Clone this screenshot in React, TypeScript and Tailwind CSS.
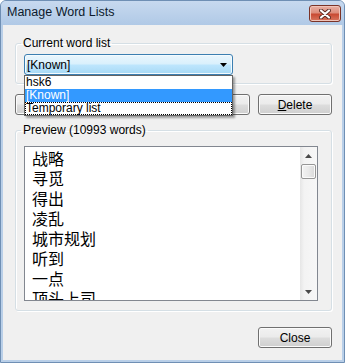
import React from "react";

const words = ["战略", "寻觅", "得出", "凌乱", "城市规划", "听到", "一点", "顶头上司"];

const WinButton: React.FC<{ children?: React.ReactNode; className?: string }> = ({ children, className = "" }) => {
  return (
    <button
      className={`h-[21px] w-[74px] shrink-0 rounded-[3px] border border-[#707070] bg-[linear-gradient(#f2f2f2_0%,#ebebeb_48%,#dddddd_52%,#cfcfcf_100%)] shadow-[inset_0_0_0_1px_#fbfbfb] text-[12px] leading-none text-black ${className}`}
    >
      {children}
    </button>
  );
};

const Arrow: React.FC<{ up?: boolean }> = ({ up }) => (
  <svg width="7" height="4" viewBox="0 0 7 4">
    {up ? <path d="M3.5 0 L7 4 L0 4 Z" fill="#4a4a4a" /> : <path d="M0 0 L7 0 L3.5 4 Z" fill="#4a4a4a" />}
  </svg>
);

export default function App() {
  return (
    <div className="flex h-[363px] w-[345px] flex-col overflow-hidden rounded-t-[6px] border border-[#6f8fb4] bg-[#b9cfe8] font-['Liberation_Sans',Arial,sans-serif] text-[12px] text-black">
      {/* title bar */}
      <div className="flex h-[24px] shrink-0 justify-between bg-[linear-gradient(#c7d9ef,#b0c9e6)] pl-[6px] pr-[3px]">
        <span className="self-center pb-[1px] text-[12.5px] text-[#0c1a2c]">Manage Word Lists</span>
        <div className="mt-[4px] flex h-[17px] w-[32px] items-center justify-center rounded-[3px] border border-[#7b3327] bg-[linear-gradient(#e9b0a4_0%,#dd8d7c_45%,#c84a33_55%,#d8765f_100%)] shadow-[inset_0_0_0_1px_#f0c4b9]">
          <svg width="12" height="10" viewBox="0 0 12 10">
            <path d="M2 1.5 L10 8.5 M10 1.5 L2 8.5" stroke="#5a2a22" strokeWidth="4" strokeLinecap="round" />
            <path d="M2 1.5 L10 8.5 M10 1.5 L2 8.5" stroke="#ffffff" strokeWidth="2.2" strokeLinecap="round" />
          </svg>
        </div>
      </div>

      {/* client area */}
      <div className="mx-[2px] mb-[2px] flex flex-1 flex-col bg-[#f0f0f0] pl-[12px] pt-[11px]">
        <fieldset className="w-[317px] rounded-[3px] border border-[#d5dfe5] pb-[8px] pl-[8px] shadow-[inset_1px_1px_0_#fff,1px_1px_0_#fff]">
          <legend className="-ml-[3px] px-[2px] text-[12px] leading-[15px]">Current word list</legend>
          <div className="relative mt-[3px] w-[209px]">
            <div className="flex h-[21px] items-center justify-between rounded-[3px] border border-[#3c7fb1] bg-[linear-gradient(#eaf6fd_0%,#d9f0fc_48%,#bee6fd_52%,#a7d9f5_100%)] pl-[2px] pr-[5px] shadow-[inset_0_0_0_1px_#f4fbff]">
              <span>[Known]</span>
              <svg width="7" height="4" viewBox="0 0 7 4">
                <path d="M0 0 L7 0 L3.5 4 Z" fill="#000" />
              </svg>
            </div>
            {/* open dropdown */}
            <div className="absolute left-0 top-full z-10 w-[209px] border border-[#646464] bg-white shadow-[2px_2px_2px_rgba(0,0,0,0.35)]">
              <div className="h-[13px] pl-[1px] leading-[13px]">hsk6</div>
              <div className="h-[13px] bg-[#3399ff] pl-[1px] leading-[13px] text-white">[Known]</div>
              <div className="h-[13px] border border-dotted border-black pl-0 leading-[11px]">Temporary list</div>
            </div>
          </div>
        </fieldset>

        {/* buttons row, the first two sit under the open dropdown */}
        <div className="mt-[10px] flex w-[317px]">
          <WinButton />
          <div className="flex-1" />
          <WinButton />
          <WinButton className="ml-[8px]">
            <span className="underline">D</span>elete
          </WinButton>
        </div>

        <fieldset className="mt-[8px] w-[317px] rounded-[3px] border border-[#d5dfe5] pb-[9px] pl-[8px] pr-[13px] shadow-[inset_1px_1px_0_#fff,1px_1px_0_#fff]">
          <legend className="-ml-[3px] px-[2px] text-[12px] leading-[15px]">Preview (10993 words)</legend>
          <div className="mt-[8px] flex h-[155px] border border-[#828790] bg-white">
            <div className="flex-1 overflow-hidden pl-[7px] pt-[1px] font-['Noto_Sans_CJK_SC',sans-serif] text-[16px] leading-[20px] text-black">
              {words.map((w) => (
                <div key={w}>{w}</div>
              ))}
            </div>
            <div className="flex w-[17px] flex-col bg-[linear-gradient(90deg,#e6e6e6,#f3f3f3_25%,#f7f7f7)]">
              <div className="flex h-[17px] items-center justify-center">
                <Arrow up />
              </div>
              <div className="mx-auto h-[15px] w-[15px] rounded-[2px] border border-[#969696] bg-[linear-gradient(90deg,#f3f3f3,#e9e9e9_50%,#d9d9d9)] shadow-[inset_0_0_0_1px_#fafafa]" />
              <div className="flex-1" />
              <div className="flex h-[17px] items-center justify-center">
                <Arrow />
              </div>
            </div>
          </div>
        </fieldset>

        <div className="mt-[16px] flex w-[317px] justify-end">
          <WinButton>Close</WinButton>
        </div>
      </div>
    </div>
  );
}
